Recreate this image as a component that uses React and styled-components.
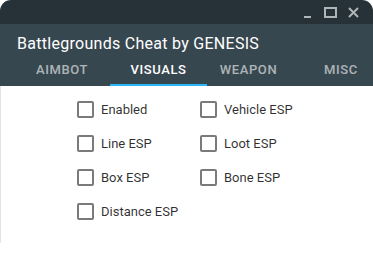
import React, { useState } from 'react';
import styled, { createGlobalStyle } from 'styled-components';

const GlobalStyle = createGlobalStyle`
  html, body {
    margin: 0;
    padding: 0;
    background: #ffffff;
    overflow: hidden;
  }
  body {
    font-family: Roboto, "Liberation Sans", sans-serif;
  }
`;

const Window = styled.div`
  width: 373px;
  border-radius: 11px 11px 0 0;
  overflow: hidden;
  background: #ffffff;
`;

const TitleBar = styled.div`
  height: 24px;
  background: #263238;
  display: flex;
  justify-content: flex-end;
  align-items: center;
  padding-right: 13px;
  gap: 10px;
`;

const WinButton = styled.svg`
  width: 13px;
  height: 13px;
  display: block;
  color: #b0b5b8;
`;

const AppBar = styled.div`
  background: #37474f;
`;

const Title = styled.div`
  padding: 10px 17px 2px;
  font-size: 16px;
  line-height: 20px;
  color: #ffffff;
  letter-spacing: 0.28px;
`;

const Tabs = styled.div`
  display: flex;
  height: 30px;
  padding-left: 14px;
  overflow: hidden;
`;

const Tab = styled.div`
  flex: 0 0 ${(p) => p.$width}px;
  position: relative;
  display: flex;
  align-items: center;
  justify-content: center;
  font-size: 13px;
  font-weight: 500;
  letter-spacing: 0.6px;
  text-transform: uppercase;
  color: ${(p) => (p.$active ? '#ffffff' : 'rgba(255, 255, 255, 0.6)')};
  padding-bottom: 3px;

  &::after {
    content: '';
    position: absolute;
    left: 0;
    right: 0;
    bottom: 0;
    height: 2px;
    background: ${(p) => (p.$active ? '#29b6f6' : 'transparent')};
  }
`;

const Content = styled.div`
  height: 151px;
  border-left: 1px solid #e4e4e4;
  padding: 6px 0 0 76px;
  display: grid;
  grid-template-columns: 123px 123px;
  grid-auto-rows: 34px;
  align-content: start;
`;

const Option = styled.label`
  display: flex;
  align-items: center;
  gap: 7px;
  font-size: 13px;
  color: rgba(0, 0, 0, 0.82);
  cursor: pointer;
`;

const Box = styled.span`
  width: 17px;
  height: 17px;
  box-sizing: border-box;
  border: 2px solid #7a7a7a;
  border-radius: 2px;
  background: ${(p) => (p.$checked ? '#29b6f6' : 'transparent')};
`;

const options = [
  'Enabled',
  'Vehicle ESP',
  'Line ESP',
  'Loot ESP',
  'Box ESP',
  'Bone ESP',
  'Distance ESP',
];

const tabs = [
  { name: 'Aimbot', width: 96 },
  { name: 'Visuals', width: 97 },
  { name: 'Weapon', width: 83 },
  { name: 'Misc', width: 102 },
];

export default function App() {
  const [checked, setChecked] = useState({});

  return (
    <Window>
      <GlobalStyle />
      <TitleBar>
        <WinButton viewBox="0 0 13 13">
          <rect x="3" y="10" width="7" height="2" fill="currentColor" />
        </WinButton>
        <WinButton viewBox="0 0 13 13">
          <rect x="1" y="2" width="11" height="9" fill="none" stroke="currentColor" strokeWidth="2" />
        </WinButton>
        <WinButton viewBox="0 0 13 13">
          <path d="M2 2 L11 11 M11 2 L2 11" stroke="currentColor" strokeWidth="2" />
        </WinButton>
      </TitleBar>
      <AppBar>
        <Title>Battlegrounds Cheat by GENESIS</Title>
        <Tabs>
          {tabs.map((t) => (
            <Tab key={t.name} $width={t.width} $active={t.name === 'Visuals'}>
              {t.name}
            </Tab>
          ))}
        </Tabs>
      </AppBar>
      <Content>
        {options.map((o) => (
          <Option key={o} onClick={() => setChecked((c) => ({ ...c, [o]: !c[o] }))}>
            <Box $checked={checked[o]} />
            {o}
          </Option>
        ))}
      </Content>
    </Window>
  );
}
